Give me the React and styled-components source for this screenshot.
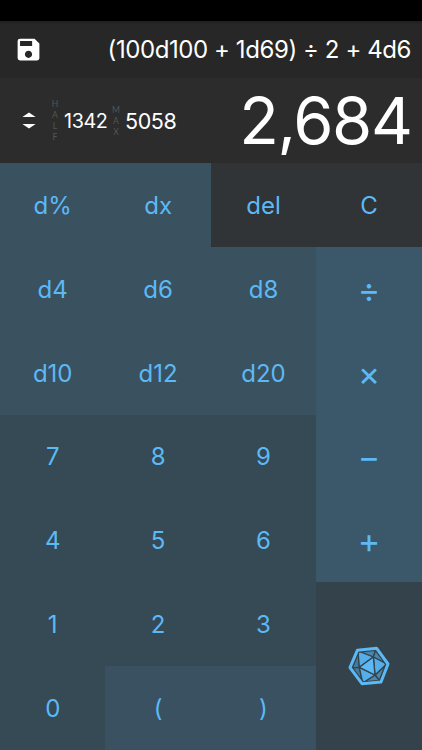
import styled, { createGlobalStyle } from 'styled-components';
import { MdSave } from 'react-icons/md';

const keys = [
  { label: 'd%', tone: 'dice' },
  { label: 'dx', tone: 'dice' },
  { label: 'del', tone: 'edit' },
  { label: 'C', tone: 'edit' },
  { label: 'd4', tone: 'dice' },
  { label: 'd6', tone: 'dice' },
  { label: 'd8', tone: 'dice' },
  { label: '÷', tone: 'operator' },
  { label: 'd10', tone: 'dice' },
  { label: 'd12', tone: 'dice' },
  { label: 'd20', tone: 'dice' },
  { label: '×', tone: 'operator' },
  { label: '7', tone: 'number' },
  { label: '8', tone: 'number' },
  { label: '9', tone: 'number' },
  { label: '−', tone: 'operator' },
  { label: '4', tone: 'number' },
  { label: '5', tone: 'number' },
  { label: '6', tone: 'number' },
  { label: '+', tone: 'operator' },
  { label: '1', tone: 'number' },
  { label: '2', tone: 'number' },
  { label: '3', tone: 'number' },
  { label: 'roll', tone: 'roll' },
  { label: '0', tone: 'number' },
  { label: '(', tone: 'paren' },
  { label: ')', tone: 'paren' },
];

const tones = {
  dice: '#3a5160',
  edit: '#303437',
  operator: '#3a586a',
  number: '#354a54',
  roll: '#34434b',
  paren: '#395161',
};

const DieIcon = () => (
  <svg width='42' height='40' viewBox='410 736 126 120' fill='#5cb9f5'>
    <g stroke='#34434b' strokeWidth='4' strokeLinejoin='round'>
      <path d='M440 751 L494 746 L486 769 Z' fill='#4a86ad' />
      <path d='M494 746 L526 790 L486 769 Z' fill='#4a86ad' />
      <path d='M526 790 L506 842 L491 823 Z' fill='#4a86ad' />
      <path d='M506 842 L454 847 L491 823 Z' fill='#4a86ad' />
      <path d='M454 847 L420 801 L444 800 Z' fill='#457a9c' />
      <path d='M420 801 L440 751 L444 800 Z' fill='#457a9c' />
      <path d='M440 751 L486 769 L444 800 Z' fill='#55aee8' />
      <path d='M486 769 L526 790 L491 823 Z' fill='#55aee8' />
      <path d='M491 823 L454 847 L444 800 Z' fill='#55aee8' />
      <path d='M444 800 L486 769 L491 823 Z' />
    </g>
    <g fill='none' strokeLinejoin='round'>
      <path d='M443 754 L492 749 L523 790 L504 839 L456 844 L423 801 Z' stroke='#34434b' strokeWidth='4' />
      <path d='M438 749 L496 743 L530 790 L509 844 L452 849 L416 801 Z' stroke='#5cb9f5' strokeWidth='9' />
    </g>
  </svg>
);

const App = () => {
  return (
    <Wrapper>
      <GlobalStyle />
      <StatusBar />
      <ExpressionBar>
        <SaveBtn aria-label='Save'>
          <MdSave />
        </SaveBtn>
        <Expression>(100d100 + 1d69) ÷ 2 + 4d6</Expression>
      </ExpressionBar>
      <ResultBar>
        <Stats>
          <Unfold width='14' height='17' viewBox='0 0 14 17'>
            <path d='M7 0.4 L13.6 5 H0.4 Z M7 16.6 L13.6 12 H0.4 Z' fill='#fff' />
          </Unfold>
          <StatLabel>
            {'HALF'.split('').map((letter) => (
              <span key={letter}>{letter}</span>
            ))}
          </StatLabel>
          <StatValue $size='19.8px' $width='44px'>
            1342
          </StatValue>
          <StatLabel>
            {'MAX'.split('').map((letter) => (
              <span key={letter}>{letter}</span>
            ))}
          </StatLabel>
          <StatValue $size='21.5px' $width='53px'>
            5058
          </StatValue>
        </Stats>
        <Result>2,684</Result>
      </ResultBar>
      <Keypad>
        {keys.map(({ label, tone }) => (
          <Key key={label} $tone={tone} aria-label={label}>
            {tone === 'roll' ? <DieIcon /> : label}
          </Key>
        ))}
      </Keypad>
    </Wrapper>
  );
};

export default App; /*





*/ // Styling

const GlobalStyle = createGlobalStyle`
  * {
    box-sizing: border-box;
    margin: 0;
    padding: 0;
  }

  body {
    background-color: #000;
    font-family: Inter, 'Liberation Sans', sans-serif;
    overflow: hidden;
  }
`;

const Wrapper = styled.main`
  display: flex;
  flex-direction: column;
  width: 422px;
  height: 750px;
`;

const StatusBar = styled.div`
  height: 21px;
  background-color: #000;
`;

const ExpressionBar = styled.header`
  display: flex;
  align-items: center;
  justify-content: space-between;
  height: 57px;
  padding: 0 11px 0 14px;
  background: linear-gradient(#1f1f1f, #272727 4px);
  color: #fff;
`;

const SaveBtn = styled.button`
  display: flex;
  border: none;
  background-color: transparent;
  color: #fff;
  font-size: 29px;
  cursor: pointer;
`;

const Expression = styled.p`
  font-size: 24px;
  letter-spacing: -0.42px;
  white-space: nowrap;
`;

const ResultBar = styled.section`
  display: flex;
  align-items: center;
  justify-content: space-between;
  height: 85px;
  padding: 0 10.5px 0 22px;
  background-color: #2c2c2c;
  color: #fff;
`;

const Stats = styled.div`
  display: flex;
  align-items: center;
`;

const Unfold = styled.svg`
  margin-right: 14px;
`;

const StatLabel = styled.div`
  display: flex;
  flex-direction: column;
  align-items: center;
  width: 10px;
  margin-right: 4px;
  padding-top: 1px;
  font-family: Lato, sans-serif;
  font-size: 8.5px;
  line-height: 11px;
  color: #555;
`;

const StatValue = styled.span`
  width: ${({ $width }) => $width};
  margin-right: 3px;
  font-size: ${({ $size }) => $size};
  letter-spacing: -0.4px;
`;

const Result = styled.h1`
  font-size: 65px;
  font-weight: 400;
  letter-spacing: -1.4px;
  line-height: 85px;
`;

const Keypad = styled.section`
  display: grid;
  flex: 1;
  grid-template-columns: repeat(3, 105.4px) 1fr;
  grid-template-rows: repeat(7, 1fr);
`;

const Key = styled.button`
  display: flex;
  align-items: center;
  justify-content: center;
  grid-row: ${({ $tone }) => $tone === 'roll' && 'span 2'};
  min-height: 0;
  border: none;
  background-color: ${({ $tone }) => tones[$tone]};
  color: #5cb9f5;
  font-family: inherit;
  font-size: ${({ $tone }) => ($tone === 'operator' ? '34px' : '24px')};
  padding-top: ${({ $tone }) => ($tone === 'roll' ? '0' : '1px')};
  cursor: pointer;
`;
